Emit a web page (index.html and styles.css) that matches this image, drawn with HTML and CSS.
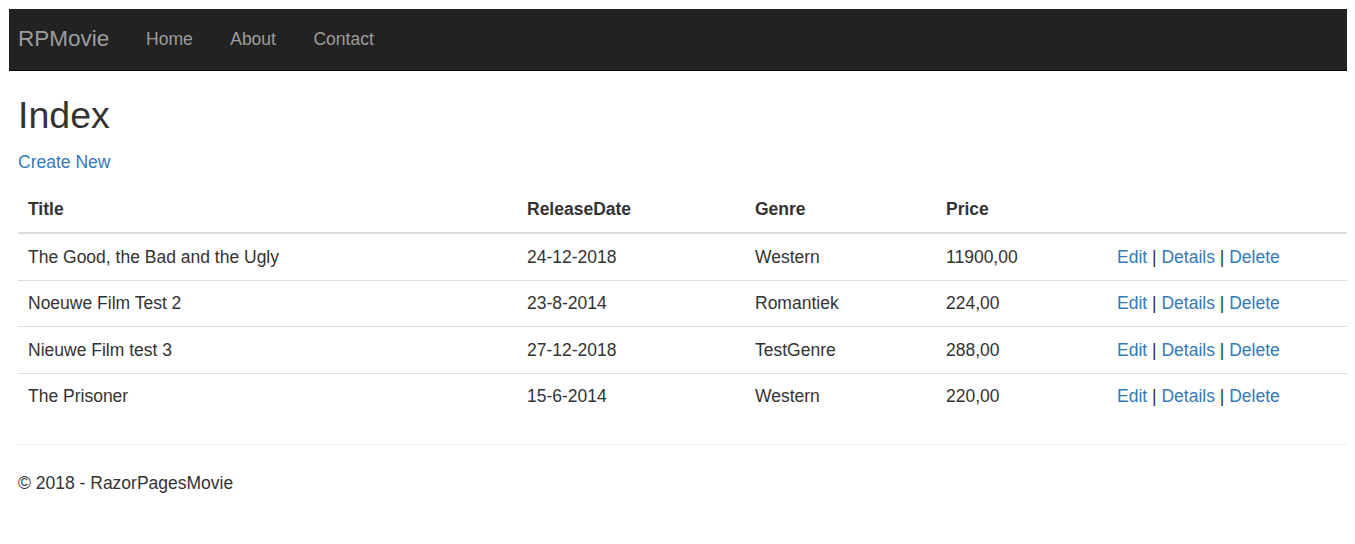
FILE: index.html
```html
<!DOCTYPE html>
<html>
<head>
<meta charset="utf-8">
<title>Index - RazorPagesMovie</title>
<link rel="stylesheet" href="styles.css">
</head>
<body>
<div class="window">
  <nav class="navbar">
    <a class="brand" href="#">RPMovie</a>
    <a class="nav-link" href="#">Home</a>
    <a class="nav-link" href="#">About</a>
    <a class="nav-link" href="#">Contact</a>
  </nav>
  <main class="content">
    <h2 class="title">Index</h2>
    <p class="create"><a href="#">Create New</a></p>
    <table class="table">
      <colgroup>
        <col class="c-title">
        <col class="c-date">
        <col class="c-genre">
        <col class="c-price">
        <col>
      </colgroup>
      <thead>
        <tr><th>Title</th><th>ReleaseDate</th><th>Genre</th><th>Price</th><th></th></tr>
      </thead>
      <tbody>
        <tr><td>The Good, the Bad and the Ugly</td><td>24-12-2018</td><td>Western</td><td>11900,00</td><td><a href="#">Edit</a> | <a href="#">Details</a> | <a href="#">Delete</a></td></tr>
        <tr><td>Noeuwe Film Test 2</td><td>23-8-2014</td><td>Romantiek</td><td>224,00</td><td><a href="#">Edit</a> | <a href="#">Details</a> | <a href="#">Delete</a></td></tr>
        <tr><td>Nieuwe Film test 3</td><td>27-12-2018</td><td>TestGenre</td><td>288,00</td><td><a href="#">Edit</a> | <a href="#">Details</a> | <a href="#">Delete</a></td></tr>
        <tr><td>The Prisoner</td><td>15-6-2014</td><td>Western</td><td>220,00</td><td><a href="#">Edit</a> | <a href="#">Details</a> | <a href="#">Delete</a></td></tr>
      </tbody>
    </table>
    <hr class="rule">
    <footer class="footer">
      <p>&copy; 2018 - RazorPagesMovie</p>
    </footer>
  </main>
</div>
</body>
</html>
```

FILE: styles.css
```css
html {
  background: #fff;
}
body {
  margin: 9px 8px 8px 9px;
  font-family: "Liberation Sans", Arial, Helvetica, sans-serif;
  font-size: 17.5px;
  line-height: 25px;
  color: #333;
}
a {
  color: #337ab7;
  text-decoration: none;
}
.window {
  height: 527px;
  background: #fff;
  box-shadow: 0 2px 7px rgba(0, 0, 0, 0.28);
  overflow: hidden;
}
.navbar {
  display: flex;
  align-items: center;
  height: 61px;
  background: #222;
  border-bottom: 1px solid #080808;
  padding-left: 9px;
}
.brand {
  font-size: 22.5px;
  line-height: 25px;
  color: #9d9d9d;
  padding-right: 18px;
  margin-top: -2px;
}
.nav-link {
  color: #9d9d9d;
  padding: 0 18.75px;
}
.content {
  padding: 24px 0 0 9px;
}
.title {
  margin: 0 0 14px;
  font-size: 37.5px;
  line-height: 41.25px;
  font-weight: 500;
}
.create {
  margin: 0 0 12px;
}
.table {
  width: 100%;
  border-collapse: collapse;
  border-spacing: 0;
  table-layout: fixed;
  margin-bottom: 25px;
}
.c-title { width: 499px; }
.c-date { width: 228px; }
.c-genre { width: 191px; }
.c-price { width: 171px; }
.table th,
.table td {
  padding: 10px;
  text-align: left;
  vertical-align: top;
}
.table th {
  font-weight: bold;
  vertical-align: bottom;
  border-bottom: 2px solid #ddd;
}
.table td {
  padding-top: 10.5px;
  border-top: 1px solid #ddd;
}
.rule {
  margin: 0 0 26px;
  border: 0;
  border-top: 1px solid #eee;
}
.footer p {
  margin: 0;
}
```
